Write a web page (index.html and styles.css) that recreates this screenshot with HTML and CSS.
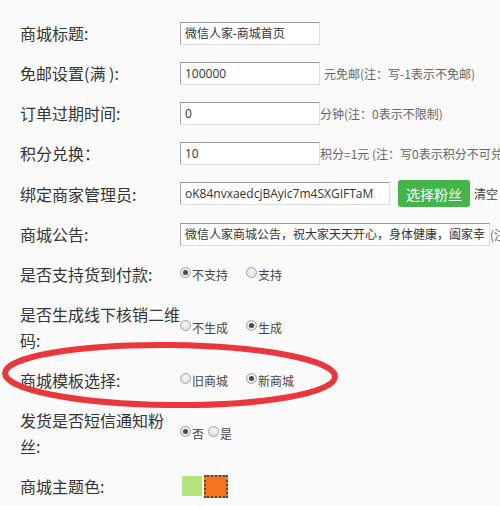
FILE: index.html
```html
<!DOCTYPE html>
<html lang="zh-CN">
<head>
<meta charset="utf-8">
<title>商城设置</title>
<link rel="stylesheet" href="styles.css">
</head>
<body>
<div class="form">
  <div class="row">
    <div class="label">商城标题:</div>
    <div class="field"><input class="txt w140" type="text" value="微信人家-商城首页"></div>
  </div>
  <div class="row">
    <div class="label">免邮设置(满 ):</div>
    <div class="field"><input class="txt w140" type="text" value="100000"><span class="hint sp"> 元免邮(注：写-1表示不免邮)</span></div>
  </div>
  <div class="row">
    <div class="label">订单过期时间:</div>
    <div class="field"><input class="txt w140" type="text" value="0"><span class="hint">分钟(注：0表示不限制)</span></div>
  </div>
  <div class="row">
    <div class="label">积分兑换：</div>
    <div class="field"><input class="txt w140" type="text" value="10"><span class="hint">积分=1元 (注：写0表示积分不可兑换)</span></div>
  </div>
  <div class="row">
    <div class="label">绑定商家管理员:</div>
    <div class="field"><input class="txt w210" type="text" value="oK84nvxaedcjBAyic7m4SXGIFTaM"><span class="btn">选择粉丝</span><span class="clear">清空</span></div>
  </div>
  <div class="row">
    <div class="label">商城公告:</div>
    <div class="field"><input class="txt w310" type="text" value="微信人家商城公告，祝大家天天开心，身体健康，阖家幸福"><span class="hint">(注：公告)</span></div>
  </div>
  <div class="row">
    <div class="label">是否支持货到付款:</div>
    <div class="field">
      <span class="opt"><span class="radio on"></span>不支持</span>
      <span class="opt"><span class="radio"></span>支持</span>
    </div>
  </div>
  <div class="row">
    <div class="label">是否生成线下核销二维码:</div>
    <div class="field">
      <span class="opt"><span class="radio"></span>不生成</span>
      <span class="opt"><span class="radio on"></span>生成</span>
    </div>
  </div>
  <div class="row">
    <div class="label">商城模板选择:</div>
    <div class="field">
      <span class="opt"><span class="radio"></span>旧商城</span>
      <span class="opt"><span class="radio on"></span>新商城</span>
    </div>
  </div>
  <div class="row">
    <div class="label">发货是否短信通知粉丝:</div>
    <div class="field">
      <span class="opt tight"><span class="radio on"></span>否</span>
      <span class="opt tight"><span class="radio"></span>是</span>
    </div>
  </div>
  <div class="row">
    <div class="label">商城主题色:</div>
    <div class="field swatches">
      <span class="swatch green"></span>
      <span class="swatch orange"></span>
    </div>
  </div>
</div>
<svg class="mark" width="500" height="506" viewBox="0 0 500 506">
  <ellipse cx="170" cy="375" rx="165" ry="30" fill="none" stroke="#e9373c" stroke-width="6" transform="rotate(0.6 170 375)"/>
</svg>
</body>
</html>
```

FILE: styles.css
```css
html, body {
  margin: 0;
  padding: 0;
  background: #fafafa;
  overflow: hidden;
  width: 500px;
  height: 506px;
}
body {
  position: relative;
  font-family: "Noto Sans CJK SC", "Open Sans", sans-serif;
  color: #333;
}
.form {
  display: flex;
  flex-direction: column;
  gap: 14px;
  padding: 20px 0 0 20px;
}
.row {
  display: flex;
  align-items: center;
  min-height: 26px;
}
.label {
  flex: 0 0 160px;
  width: 160px;
  font-size: 16px;
  line-height: 26px;
  color: #353535;
}
.field {
  display: flex;
  align-items: center;
  white-space: nowrap;
  font-size: 12px;
  color: #555;
}
.txt {
  box-sizing: border-box;
  height: 23px;
  margin: 0;
  padding: 0 4px;
  border: 1px solid;
  border-color: #9a9a9a #dedede #dedede #a8a8a8;
  background: #fff;
  font-family: "Open Sans", "Noto Sans CJK SC", sans-serif;
  font-size: 12px;
  color: #333;
  outline: none;
}
.w140 { width: 140px; }
.w210 { width: 210px; }
.w310 { width: 310px; flex: 0 0 310px; }
.hint {
  font-family: "Noto Sans CJK SC", sans-serif;
  font-size: 12px;
  color: #666;
}
.hint.sp { margin-left: 4px; }
.btn {
  display: inline-flex;
  align-items: center;
  height: 27px;
  padding: 0 8px;
  margin-left: 8px;
  background: #44b549;
  border-radius: 3px;
  color: #fff;
  font-size: 14px;
}
.clear {
  margin-left: 4px;
  font-size: 12px;
  color: #444;
}
.opt {
  display: inline-flex;
  align-items: center;
  margin-right: 18px;
  font-size: 12px;
  color: #444;
}
.opt.tight { margin-right: 4px; }
.radio {
  box-sizing: border-box;
  width: 11px;
  height: 11px;
  margin: 0 1px 4px 0;
  border: 1px solid #a5a5a5;
  border-radius: 50%;
  background: radial-gradient(circle at 50% 40%, #f4f4f4 0, #dcdcdc 100%);
  display: inline-flex;
  align-items: center;
  justify-content: center;
}
.radio.on::after {
  content: "";
  width: 5px;
  height: 5px;
  border-radius: 50%;
  background: #4a4a4a;
}
.swatches {
  gap: 2px;
  margin-left: 2px;
}
.swatch {
  display: inline-block;
}
.green {
  width: 20px;
  height: 20px;
  background: #b4e57d;
}
.orange {
  box-sizing: border-box;
  width: 24px;
  height: 23px;
  background: #f6731f;
  border: 2px dotted #5a4030;
}
.mark {
  position: absolute;
  left: 0;
  top: 0;
  pointer-events: none;
}
```
